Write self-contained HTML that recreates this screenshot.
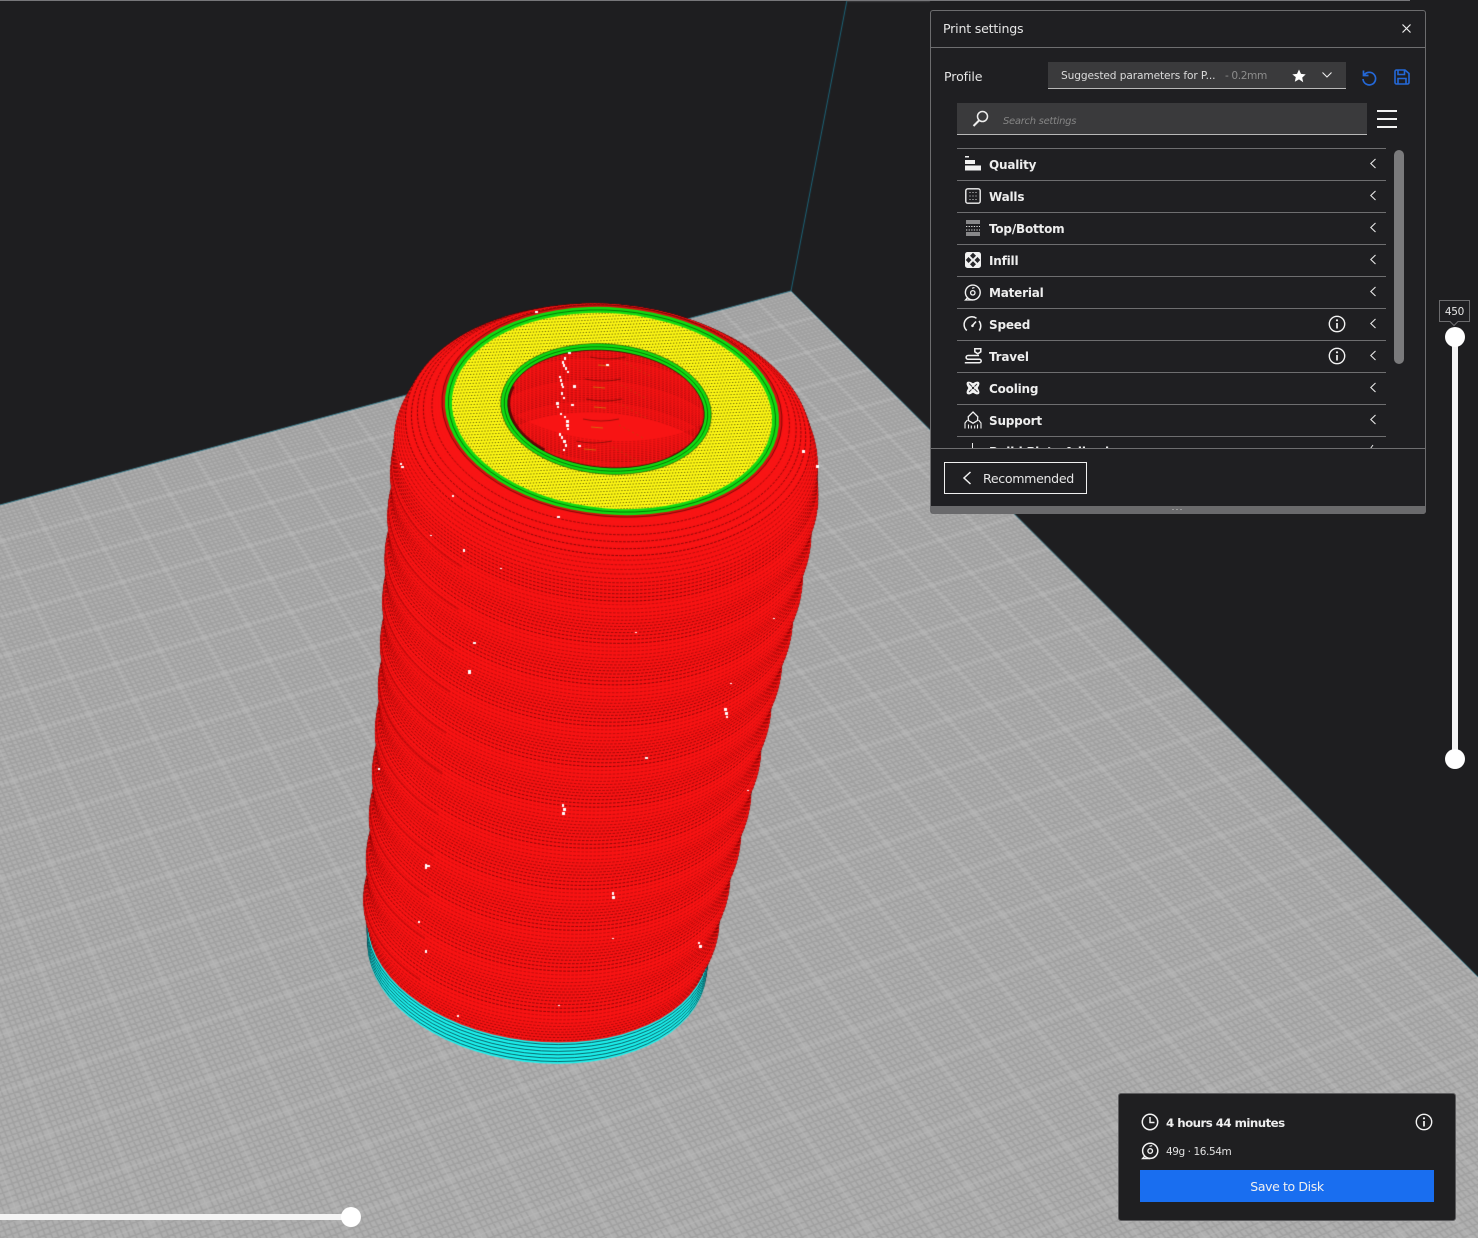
<!DOCTYPE html>
<html><head><meta charset="utf-8"><title>Print settings</title>
<style>
html,body{margin:0;padding:0;background:#1e1e20;}
#stage{position:relative;width:1478px;height:1238px;overflow:hidden;background:#1e1e20;font-family:"DejaVu Sans","Liberation Sans",sans-serif;color:#eee;}
canvas{position:absolute;left:0;top:0;}
.abs{position:absolute;}
.t{position:absolute;white-space:nowrap;line-height:16px;}
.panel{position:absolute;left:930px;top:10px;width:496px;height:504px;background:#1f1f22;border:1px solid #6c6c6e;border-radius:3px;box-sizing:border-box;overflow:hidden;}
.hl{position:absolute;left:957px;width:429px;height:1px;background:#6e6e70;}
.cat{font-size:12px;font-weight:bold;letter-spacing:-.2px;color:#eeeeee;left:989px;}
svg{position:absolute;overflow:visible;}
</style></head><body>
<div id="stage">
<canvas id="c" width="1478" height="1238"></canvas>

<div class="abs" style="left:0;top:0;width:1410px;height:1px;background:#77777a"></div>

<div class="panel"></div>
<div class="abs" style="left:931px;top:47px;width:494px;height:1px;background:#6e6e70"></div>
<div class="t" style="left:943px;top:21px;font-size:12.6px;letter-spacing:-.2px;color:#e6e6e6">Print settings</div>
<svg style="left:1402px;top:24px" width="9" height="9" viewBox="0 0 9 9"><path d="M.5.5l8 8M8.5.5l-8 8" stroke="#eee" stroke-width="1.2" fill="none"/></svg>

<div class="t" style="left:944px;top:69px;font-size:12.6px;letter-spacing:-.1px;color:#e6e6e6">Profile</div>
<div class="abs" style="left:1048px;top:62px;width:298px;height:27px;background:#3a3a3c;border-bottom:1px solid #b8b8b8;box-sizing:border-box"></div>
<div class="t" style="left:1061px;top:68px;font-size:10.6px;letter-spacing:-.1px;color:#dcdcdc">Suggested parameters for P...</div>
<div class="t" style="left:1225px;top:68px;font-size:10.6px;letter-spacing:-.4px;color:#8c8c8c">- 0.2mm</div>
<svg style="left:1292px;top:69px" width="14" height="14" viewBox="0 0 14 14"><path d="M7 .5l2 4.4 4.7.5-3.5 3.2 1 4.7L7 10.4l-4.2 2.4 1-4.7L.3 5.4 5 4.900z" fill="#fff"/></svg>
<svg style="left:1322px;top:72px" width="10" height="6" viewBox="0 0 10 6"><path d="M.5.5L5 5 9.500.5" stroke="#eee" stroke-width="1.100" fill="none"/></svg>
<svg style="left:1361px;top:69px" width="16" height="17" viewBox="0 0 16 17"><path d="M2.500 1.500v5h5M3 6.200A6.300 6.300 0 1 1 2 10" stroke="#2468d8" stroke-width="1.700" fill="none"/></svg>
<svg style="left:1394px;top:69px" width="16" height="16" viewBox="0 0 16 16"><path d="M1 2.500A1.500 1.500 0 0 1 2.500 1H11l4 3.500v9a1.500 1.500 0 0 1-1.500 1.500h-11A1.500 1.500 0 0 1 1 13.500zM4 1.500v4h6.500v-4M4 15v-5.500h8V15" stroke="#2468d8" stroke-width="1.600" fill="none"/></svg>

<div class="abs" style="left:957px;top:103px;width:410px;height:32px;background:#3a3a3c;border-bottom:1px solid #b8b8b8;box-sizing:border-box"></div>
<svg style="left:972px;top:110px" width="18" height="17" viewBox="0 0 18 17"><circle cx="10.500" cy="6.500" r="5" stroke="#eee" stroke-width="1.500" fill="none"/><path d="M7 10.500L1.500 16" stroke="#eee" stroke-width="2" fill="none"/></svg>
<div class="t" style="left:1003px;top:114px;font-size:10px;font-style:italic;letter-spacing:-.3px;color:#858585">Search settings</div>
<div class="abs" style="left:1377px;top:110px;width:20px;height:2px;background:#f2f2f2"></div>
<div class="abs" style="left:1377px;top:118px;width:20px;height:2px;background:#f2f2f2"></div>
<div class="abs" style="left:1377px;top:126px;width:20px;height:2px;background:#f2f2f2"></div>

<div class="hl" style="top:148px"></div><div class="hl" style="top:180px"></div><div class="hl" style="top:212px"></div><div class="hl" style="top:244px"></div><div class="hl" style="top:276px"></div><div class="hl" style="top:308px"></div><div class="hl" style="top:340px"></div><div class="hl" style="top:372px"></div><div class="hl" style="top:404px"></div><div class="hl" style="top:436px"></div>

<div class="t cat" style="top:157px">Quality</div>
<div class="t cat" style="top:189px">Walls</div>
<div class="t cat" style="top:221px">Top/Bottom</div>
<div class="t cat" style="top:253px">Infill</div>
<div class="t cat" style="top:285px">Material</div>
<div class="t cat" style="top:317px">Speed</div>
<div class="t cat" style="top:349px">Travel</div>
<div class="t cat" style="top:381px">Cooling</div>
<div class="t cat" style="top:413px">Support</div>

<!-- chevrons -->
<svg style="left:1370px;top:148px" width="6" height="290" viewBox="0 0 6 290" fill="none" stroke="#e8e8e8" stroke-width="1.100"><path d="M5.500 11L.8 15.500 5.500 20M5.500 43L.8 47.500 5.500 52M5.500 75L.8 79.500 5.500 84M5.500 107L.8 111.500 5.500 116M5.500 139L.8 143.500 5.500 148M5.500 171L.8 175.500 5.500 180M5.500 203L.8 207.500 5.500 212M5.500 235L.8 239.500 5.500 244M5.500 267L.8 271.500 5.500 276"/></svg>

<!-- category icons -->
<svg style="left:965px;top:156px" width="16" height="16" viewBox="0 0 16 16" fill="#f2f2f2"><rect x="0" y="0" width="4" height="1.500"/><rect x="0" y="4" width="10" height="4"/><rect x="0" y="9.500" width="16" height="5"/></svg>
<svg style="left:965px;top:188px" width="16" height="16" viewBox="0 0 16 16"><rect x=".8" y=".8" width="14.400" height="14.400" rx="2" fill="none" stroke="#f2f2f2" stroke-width="1.400"/><path d="M4.500 4.500h7M4.500 8h7M4.500 11.500h7" stroke="#ddd" stroke-width="1" stroke-dasharray="1 2" fill="none"/></svg>
<svg style="left:966px;top:220px" width="14" height="16" viewBox="0 0 14 16" fill="none"><path d="M0 1h14M0 3h14M0 13h14M0 15h14" stroke="#f2f2f2" stroke-width="1"/><path d="M0 6.500h14M0 10h14" stroke="#ddd" stroke-width="1" stroke-dasharray="1.300 1.300"/></svg>
<svg style="left:965px;top:252px" width="16" height="16" viewBox="0 0 16 16"><rect width="16" height="16" rx="2.500" fill="#f2f2f2"/><g fill="#26262a"><path d="M8 .8l3 2.900-3 3-3-3zM3.500 5l3 3-3 3-2.700-3zM12.500 5l2.700 3-2.700 3-3-3zM8 9.300l3 3-3 2.900-3-2.900z"/></g></svg>
<svg style="left:964px;top:284px" width="18" height="17" viewBox="0 0 18 17" fill="none" stroke="#f2f2f2"><circle cx="8.800" cy="8.500" r="7.400" stroke-width="1.400"/><path d="M3.500 13.800L1.500 16H8.800" stroke-width="1.300"/><circle cx="8.800" cy="8.800" r="2.200" stroke-width="1.300"/><path d="M8 4.200l2.500-.6" stroke-width="1.200"/></svg>
<svg style="left:964px;top:316px" width="18" height="16" viewBox="0 0 18 16" fill="none" stroke="#f2f2f2" stroke-width="1.500"><path d="M2.800 14.500A7.800 7.800 0 0 1 12.500 2.300"/><path d="M15 5a7.800 7.800 0 0 1 .3 9.500"/><path d="M8 10l4-4.500" stroke-width="1.600"/><circle cx="8.500" cy="9.800" r="1.300" fill="#f2f2f2" stroke="none"/></svg>
<svg style="left:964px;top:348px" width="18" height="16" viewBox="0 0 18 16" fill="none" stroke="#f2f2f2" stroke-width="1.500"><path d="M10.800.8h6v3l-3 2-3-2z"/><path d="M15 7.500H4a1.900 1.900 0 0 0 0 3.800h11.500a1.700 1.700 0 0 1 0 3.400H.8"/></svg>
<svg style="left:965px;top:380px" width="16" height="16" viewBox="0 0 16 16"><g fill="#f2f2f2"><ellipse cx="8" cy="8" rx="8.300" ry="3.600" transform="rotate(45 8 8)"/><ellipse cx="8" cy="8" rx="8.300" ry="3.600" transform="rotate(-45 8 8)"/></g><path d="M4 3.500l3 3M12.500 12l-3-3M12 4L9.500 6.500M4 12l2.500-2.500" stroke="#3a3a3e" stroke-width=".9"/><circle cx="8" cy="8" r="1.200" fill="#26262a"/></svg>
<svg style="left:964px;top:411px" width="18" height="18" viewBox="0 0 18 18" fill="none" stroke="#f2f2f2" stroke-width="1.300"><path d="M9 1l4.800 4.800-.3 3.700L9 12.200 4.500 9.500l-.3-3.700z"/><path d="M1 17.500v-5.500L3.500 9M17 17.500v-5.500L14.500 9M4.500 17.500v-4M7.300 17.500v-3M10.700 17.500v-3M13.500 17.500v-4" stroke-width="1.100"/></svg>

<!-- info icons -->
<svg style="left:1328px;top:315px" width="18" height="18" viewBox="0 0 18 18" fill="none"><circle cx="9" cy="9" r="7.700" stroke="#f2f2f2" stroke-width="1.400"/><path d="M9 8v5.500" stroke="#f2f2f2" stroke-width="1.700"/><circle cx="9" cy="5.300" r="1.100" fill="#f2f2f2"/></svg>
<svg style="left:1328px;top:347px" width="18" height="18" viewBox="0 0 18 18" fill="none"><circle cx="9" cy="9" r="7.700" stroke="#f2f2f2" stroke-width="1.400"/><path d="M9 8v5.500" stroke="#f2f2f2" stroke-width="1.700"/><circle cx="9" cy="5.300" r="1.100" fill="#f2f2f2"/></svg>

<!-- partially hidden row -->
<div class="abs" style="left:957px;top:437px;width:430px;height:11px;overflow:hidden">
 <div class="abs" style="left:15px;top:6px;width:1px;height:5px;background:#eee"></div>
 <div class="t cat" style="left:32px;top:7px">Build Plate Adhesion</div>
 <svg style="left:413px;top:8px" width="6" height="3" viewBox="0 0 6 3"><path d="M3 0L.8 3" stroke="#e8e8e8" fill="none"/></svg>
</div>

<!-- scrollbar -->
<div class="abs" style="left:1394px;top:150px;width:10px;height:214px;border-radius:5px;background:#7a7a7c"></div>

<!-- footer -->
<div class="abs" style="left:931px;top:448px;width:494px;height:1px;background:#6e6e70"></div>
<div class="abs" style="left:944px;top:462px;width:143px;height:32px;border:1px solid #f0f0f0;box-sizing:border-box"></div>
<svg style="left:962px;top:471px" width="10" height="14" viewBox="0 0 10 14"><path d="M8.500 1L2 7l6.500 6" stroke="#f0f0f0" stroke-width="1.500" fill="none"/></svg>
<div class="t" style="left:983px;top:471px;font-size:12.600px;letter-spacing:-.33px;color:#e6e6e6">Recommended</div>
<div class="abs" style="left:931px;top:506px;width:495px;height:8px;background:#6a6a6c;border-radius:0 0 3px 3px"></div>
<div class="abs" style="left:1172px;top:509px;width:11px;height:1px;background:repeating-linear-gradient(90deg,#999 0 2px,transparent 2px 4px)"></div>

<!-- vertical slider -->
<div class="abs" style="left:1452px;top:337px;width:6px;height:422px;background:#f4f4f4"></div>
<div class="abs" style="left:1445px;top:327px;width:20px;height:20px;border-radius:50%;background:#fff"></div>
<div class="abs" style="left:1445px;top:749px;width:20px;height:20px;border-radius:50%;background:#fff"></div>
<div class="abs" style="left:1439px;top:300px;width:31px;height:22px;border:1px solid #6c6c6e;background:#1f1f22;box-sizing:border-box"></div>
<div class="t" style="left:1439px;top:304px;width:31px;text-align:center;font-size:10.500px;letter-spacing:-.3px;color:#e6e6e6">450</div>
<div class="abs" style="left:1451px;top:319px;width:6px;height:6px;background:#1f1f22;border-right:1px solid #6c6c6e;border-bottom:1px solid #6c6c6e;transform:rotate(45deg);box-sizing:border-box"></div>

<!-- horizontal slider -->
<div class="abs" style="left:0;top:1214px;width:351px;height:6px;background:#f4f4f4"></div>
<div class="abs" style="left:341px;top:1207px;width:20px;height:20px;border-radius:50%;background:#fff"></div>

<!-- estimate card -->
<div class="abs" style="left:1118px;top:1093px;width:338px;height:128px;background:#1f1f21;border:1px solid #5c5c5e;border-radius:3px;box-sizing:border-box"></div>
<svg style="left:1141px;top:1113px" width="18" height="18" viewBox="0 0 18 18" fill="none" stroke="#f2f2f2"><circle cx="9" cy="9" r="7.700" stroke-width="1.500"/><path d="M9 4v5.500h4.500" stroke-width="1.500"/></svg>
<div class="t" style="left:1166px;top:1115px;font-size:11.800px;font-weight:bold;letter-spacing:-.55px;color:#eee">4 hours 44 minutes</div>
<svg style="left:1415px;top:1113px" width="18" height="18" viewBox="0 0 18 18" fill="none"><circle cx="9" cy="9" r="7.700" stroke="#f2f2f2" stroke-width="1.400"/><path d="M9 8v5.500" stroke="#f2f2f2" stroke-width="1.700"/><circle cx="9" cy="5.300" r="1.100" fill="#f2f2f2"/></svg>
<svg style="left:1141px;top:1142px" width="18" height="18" viewBox="0 0 18 18" fill="none" stroke="#f2f2f2"><circle cx="9.200" cy="8.800" r="7.600" stroke-width="1.500"/><path d="M3.700 14.200L1.600 16.600H9.200" stroke-width="1.400"/><circle cx="9.200" cy="9" r="2.300" stroke-width="1.400"/><path d="M8.500 4.300l2.700-.6" stroke-width="1.200"/></svg>
<div class="t" style="left:1166px;top:1144px;font-size:10.500px;letter-spacing:-.42px;color:#e0e0e0">49g · 16.54m</div>
<div class="t" style="left:1140px;top:1170px;width:294px;height:32px;line-height:33px;background:#196ef0;text-align:center;font-size:12.500px;letter-spacing:-.38px;color:#f0f0f0">Save to Disk</div>
</div>

<script>
(function(){
var c=document.getElementById('c').getContext('2d');
var W=1478,H=1238;
c.fillStyle='#1e1e20';c.fillRect(0,0,W,H);
/* build volume line */
c.strokeStyle='#1d6478';c.lineWidth=1;
c.beginPath();c.moveTo(791,291);c.lineTo(847,0);c.stroke();
c.strokeStyle='#3a3a3c';c.beginPath();c.moveTo(847,1.500);c.lineTo(930,1.500);c.stroke();
/* plate */
c.save();
c.beginPath();c.moveTo(791,291);c.lineTo(0,505);c.lineTo(0,H);c.lineTo(W,H);c.lineTo(W,977);c.closePath();
c.fillStyle='#b0b0b0';c.fill();c.clip();
var Cx=791,Cy=291,VA=[-1040,-1540],VB=[8500,-1800],a=.00045,b=.00137;
function P(s,t){var k=s*a,j=t*b,d=1-k-j;return [(Cx-k*VB[0]-j*VA[0])/d,(Cy-k*VB[1]-j*VA[1])/d];}
function seg(p,q){c.moveTo(p[0],p[1]);c.lineTo(q[0],q[1]);}
var i,sm=700,tm=500;
c.lineWidth=1.500;c.strokeStyle='rgba(145,145,145,.5)';c.beginPath();
for(i=0;i<tm;i++){if(i%10){var sx=Math.min(sm,(0.96-i*b)/a);if(sx>0)seg(P(0,i),P(sx,i));}}
for(i=0;i<sm;i++){if(i%10){var tx=Math.min(tm,(0.96-i*a)/b);if(tx>0)seg(P(i,0),P(i,tx));}}
c.stroke();
c.lineWidth=1.500;c.strokeStyle='rgba(188,188,188,.45)';c.beginPath();
for(i=0;i<tm;i+=10){var sx2=Math.min(sm,(0.96-i*b)/a);if(sx2>0)seg(P(0,i),P(sx2,i));}
for(i=0;i<sm;i+=10){var tx2=Math.min(tm,(0.96-i*a)/b);if(tx2>0)seg(P(i,0),P(i,tx2));}
c.stroke();
c.restore();
c.strokeStyle='#3f7f8f';c.lineWidth=1;c.beginPath();c.moveTo(791,291);c.lineTo(0,505);c.moveTo(791,291);c.lineTo(W,977);c.stroke();

/* model */
var tbl=[[411,168,612],[418,185,610],[430,203,608],[450,212,606],[490,213,604],[580,207,592],[700,195,574],[800,187,559],[912,177,541],[937,172,538],[958,170,537]];
function lerp(cy,idx){for(var i=0;i<tbl.length-1;i++){if(cy<=tbl[i+1][0]){var f=(cy-tbl[i][0])/(tbl[i+1][0]-tbl[i][0]);return tbl[i][idx]+f*(tbl[i+1][idx]-tbl[i][idx]);}}return tbl[tbl.length-1][idx];}
var cy,rot,n=0;
for(cy=958;cy>=412;cy-=1.2){
  n++;
  var rx=lerp(cy,1),cx=lerp(cy,2);
  var ph=(cy%43)/43;
  if(cy>470&&cy<=937)rx+=1.500*Math.sin(ph*6.283);
  rot=(5+2*(cy-411)/547)*Math.PI/180;
  var cyan=cy>937;
  c.beginPath();c.ellipse(cx,cy,rx,rx*.615,rot,0,6.2832);
  c.fillStyle=cyan?'#1ef6f2':'#f81414';c.fill();
  if(n%3==0){
    if(cyan){c.setLineDash([]);c.lineWidth=.9;c.strokeStyle='rgba(0,30,40,.85)';c.stroke();}
    else{
      c.setLineDash([2.600,1.400]);c.lineWidth=1;
      c.strokeStyle='rgba(80,0,0,'+(.3+.45*ph).toFixed(2)+')';c.stroke();c.setLineDash([]);
    }
  }
  if(!cyan&&cy>470&&ph>.08&&ph<.14){
    c.beginPath();c.ellipse(cx,cy,rx,rx*.615,rot,2.250,3.350);
    c.lineWidth=1;c.strokeStyle='rgba(100,0,0,.28)';c.stroke();
  }
}
function el(x,y,rx,ry,r,fill,stroke,lw){c.beginPath();c.ellipse(x,y,rx,ry,r*Math.PI/180,0,6.2832);if(fill){c.fillStyle=fill;c.fill();}if(stroke){c.strokeStyle=stroke;c.lineWidth=lw||1;c.stroke();}}
/* top ring */
var X=612,Y=411,R=5;
el(X,Y,170.500,105.500,R,'#d81010','rgba(70,0,0,.6)',1);
el(X,Y,167.500,103.500,R,'#12dc12');
el(X,Y,164,100.500,R,null,'rgba(0,70,0,.7)',1);
el(X,Y,160.500,97.500,R,'#fff814');
/* yellow dots */
c.save();c.beginPath();c.ellipse(X,Y,160.500,97.500,R*Math.PI/180,0,6.2832);c.clip();
c.fillStyle='rgba(20,20,0,.72)';
var dx,dy,row=0;
for(dy=300;dy<525;dy+=3){row++;for(dx=440+(row%2)*1.500;dx<790;dx+=3){c.fillRect(dx+(dy-300)*.12,dy-(dx-440)*.05,1.300,1);}}
c.restore();
var HX=606,HY=409;
el(HX,HY,105.500,65,R,'#12dc12','rgba(0,50,0,.7)',.8);
el(HX,HY,102,61.800,R,null,'rgba(0,70,0,.7)',1);
el(HX,HY,98.500,58.500,R,'#f81414','rgba(30,0,0,.7)',1);
/* hole interior */
c.save();c.beginPath();c.ellipse(HX,HY,98.500,58.500,R*Math.PI/180,0,6.2832);c.clip();
for(i=0;i<54;i++){
  c.beginPath();c.ellipse(HX,HY-30+i*1.800,125,62,R*Math.PI/180,0,6.2832);
  c.setLineDash([2.600,1.400]);c.strokeStyle='rgba(80,0,0,'+(.25+.3*((i%12)/12)).toFixed(2)+')';c.lineWidth=.8;c.stroke();c.setLineDash([]);
}
c.strokeStyle='rgba(25,0,0,.6)';c.lineWidth=6;
c.beginPath();c.ellipse(HX,HY,99,59,R*Math.PI/180,2.200,3.400);c.stroke();
c.strokeStyle='rgba(25,0,0,.4)';c.lineWidth=3;
c.beginPath();c.ellipse(HX,HY,99,59,R*Math.PI/180,.15,.8);c.stroke();
var st=[[590,357],[585,379],[586,399],[583,419],[576,441]];
c.lineWidth=.8;
st.forEach(function(p){
  c.strokeStyle='rgba(60,10,0,.6)';c.beginPath();c.moveTo(p[0],p[1]);c.quadraticCurveTo(p[0]+18,p[1]+4,p[0]+36,p[1]);c.stroke();
  c.strokeStyle='rgba(200,138,16,.9)';c.beginPath();c.moveTo(p[0]+8,p[1]+8);c.lineTo(p[0]+20,p[1]+9);c.stroke();
  c.setLineDash([2,3]);c.strokeStyle='rgba(170,90,10,.6)';c.beginPath();c.moveTo(p[0]+36,p[1]+6);c.lineTo(p[0]+62,p[1]+20);c.stroke();c.setLineDash([]);
});
c.restore();
/* white specks */
c.fillStyle='#fff';
var sp=[[535,311,3,2],[401,466,3,2],[400,463,2,2],[452,495,2,2],[463,549,2,3],[473,642,3,2],[468,670,3,4],[724,708,3,3],[725,712,3,3],[726,716,2,2],[562,804,2,3],[563,808,3,3],[562,812,3,3],[612,892,2,3],[612,896,3,3],[427,865,3,2],[425,864,2,5],[425,950,2,3],[698,942,2,2],[699,945,3,3],[645,757,3,2],[378,768,2,2],[816,465,3,3],[802,450,3,3],[557,516,3,2],[418,921,2,2],[457,1015,2,2],[612,938,2,1],[558,1005,2,1],[430,535,2,1],[500,568,2,1],[635,632,2,1],[730,683,2,1],[747,790,2,1],[773,618,2,1],
[564,357,2,3],[562,361,2,3],[563,364,2,3],[565,367,2,3],[567,371,2,2],[559,376,2,2],[560,379,2,3],[561,383,2,3],[562,386,2,2],[573,385,3,3],[561,392,2,3],[563,397,2,2],[556,402,3,3],[557,406,2,2],[571,404,3,2],[560,413,2,2],[564,416,2,2],[566,420,3,3],[566,424,3,3],[567,428,2,2],[559,433,2,3],[561,436,2,3],[563,440,3,3],[565,444,2,3],[563,449,2,2],[578,445,3,2],[568,352,3,2],[606,364,3,2]];
sp.forEach(function(p){c.fillRect(p[0],p[1],p[2],p[3]);});
})();
</script>
</body></html>
